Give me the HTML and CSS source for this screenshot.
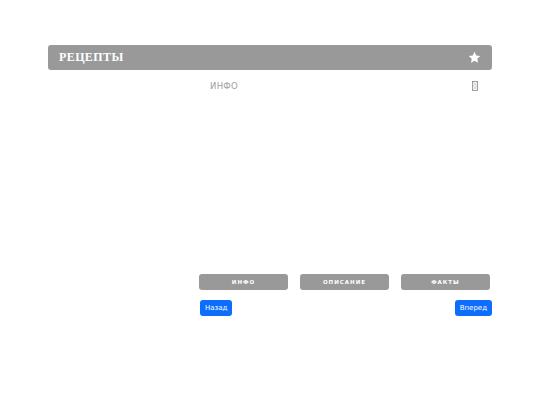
FILE: index.html
```html
<!DOCTYPE html>
<html lang="ru">
<head>
<meta charset="utf-8">
<title>Рецепты</title>
<link rel="stylesheet" href="styles.css">
</head>
<body>
<div class="page">
  <div class="header">
    <span class="title">РЕЦЕПТЫ</span>
    <svg class="star" viewBox="0 0 24 24" width="13" height="13"><path d="M12 1.5l3.2 6.8 7.3.9-5.4 5 1.4 7.3L12 17.9l-6.5 3.6 1.4-7.3-5.4-5 7.3-.9z" fill="#fff"/></svg>
  </div>
  <div class="content">
    <div class="side"></div>
    <div class="main">
      <div class="pane">
        <div class="info-row">
          <span class="info-label">ИНФО</span>
          <svg class="tofu" viewBox="0 0 6 10" width="6" height="10"><rect x="0.5" y="0.5" width="5" height="9" fill="none" stroke="#888" stroke-width="0.8"/><path d="M1.2 1.5L4.8 5M4.8 1.5L1.2 5M1.2 5L4.8 8.5M4.8 5L1.2 8.5" stroke="#aaa" stroke-width="0.6"/></svg>
        </div>
      </div>
      <div class="tabs">
        <button class="tab">ИНФО</button>
        <button class="tab">ОПИСАНИЕ</button>
        <button class="tab">ФАКТЫ</button>
      </div>
      <div class="nav">
        <button class="btn">Назад</button>
        <button class="btn">Вперед</button>
      </div>
    </div>
  </div>
</div>
</body>
</html>
```
FILE: styles.css
```css
html, body {
  margin: 0;
  padding: 0;
  background: #fff;
}
.page {
  margin-left: 48px;
  width: 444px;
  padding-top: 45px;
}
.header {
  height: 25px;
  background: #999;
  border-radius: 3px;
  display: flex;
  align-items: center;
  justify-content: space-between;
  padding: 0 11px;
  box-sizing: border-box;
}
.title {
  font-family: "Liberation Serif", serif;
  font-weight: bold;
  font-size: 12px;
  letter-spacing: 0.4px;
  color: #fff;
}
.star {
  display: block;
}
.content {
  display: flex;
}
.side {
  width: 151px;
  flex: none;
}
.main {
  width: 293px;
}
.pane {
  height: 194px;
}
.info-row {
  margin-top: 10px;
  height: 12px;
  display: flex;
  align-items: center;
  justify-content: space-between;
  padding: 0 14px 0 11px;
}
.info-label {
  font-family: "DejaVu Sans", sans-serif;
  font-size: 8.5px;
  color: #a0a0a0;
  letter-spacing: 0.3px;
}
.tofu {
  display: block;
}
.tabs {
  width: 291px;
  display: flex;
  justify-content: space-between;
}
.tab {
  width: 89px;
  height: 16px;
  border: none;
  border-radius: 3px;
  background: #999;
  color: #fff;
  font-family: "DejaVu Sans", sans-serif;
  font-weight: bold;
  font-size: 5.5px;
  letter-spacing: 1px;
  padding: 0;
}
.nav {
  margin-top: 10px;
  display: flex;
  justify-content: space-between;
  padding: 0 0 0 1px;
}
.btn {
  height: 16px;
  border: none;
  border-radius: 3px;
  background: #0d6efd;
  color: #fff;
  font-family: "DejaVu Sans", sans-serif;
  font-size: 7px;
  padding: 0 5px;
}
```
